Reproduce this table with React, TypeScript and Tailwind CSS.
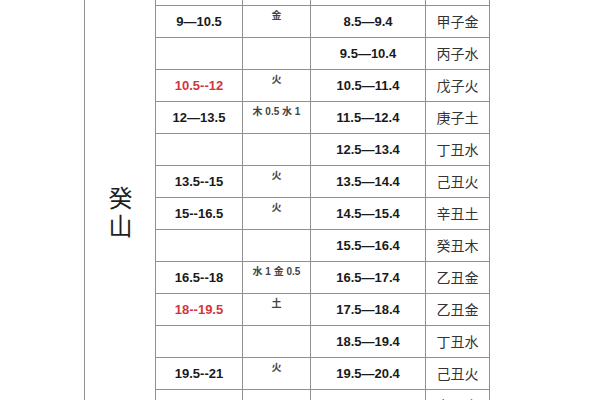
import React from "react";

type Row = {
  range?: string;
  red?: boolean;
  element?: string;
  sub?: string;
  name?: string;
};

const rows: Row[] = [
  {},
  { range: "9—10.5", element: "金", sub: "8.5—9.4", name: "甲子金" },
  { sub: "9.5—10.4", name: "丙子水" },
  { range: "10.5--12", red: true, element: "火", sub: "10.5—11.4", name: "戊子火" },
  { range: "12—13.5", element: "木 0.5 水 1", sub: "11.5—12.4", name: "庚子土" },
  { sub: "12.5—13.4", name: "丁丑水" },
  { range: "13.5--15", element: "火", sub: "13.5—14.4", name: "己丑火" },
  { range: "15--16.5", element: "火", sub: "14.5—15.4", name: "辛丑土" },
  { sub: "15.5—16.4", name: "癸丑木" },
  { range: "16.5--18", element: "水 1 金 0.5", sub: "16.5—17.4", name: "乙丑金" },
  { range: "18--19.5", red: true, element: "土", sub: "17.5—18.4", name: "乙丑金" },
  { sub: "18.5—19.4", name: "丁丑水" },
  { range: "19.5--21", element: "火", sub: "19.5—20.4", name: "己丑火" },
  { sub: "20.5—21.4", name: "辛丑土" },
];

const cell = "border-r border-b border-[#8f8f8f] h-[32px] flex items-center justify-center";

export default function App() {
  return (
    <div
      className="w-[600px] h-[400px] overflow-hidden bg-white"
      style={{ fontFamily: '"Liberation Sans", "Noto Sans CJK SC", sans-serif' }}
    >
      <div className="ml-[84px] -mt-[26px] w-[406px] border-l border-[#8f8f8f] grid grid-cols-[71px_87px_68px_115px_64px] auto-rows-[32px]">
        <div
          className="border-r border-[#8f8f8f] flex justify-center pt-[212px] text-[24px] text-[#1e1e1e]"
          style={{ gridRow: "1 / span 14", fontFamily: '"Noto Sans CJK SC", sans-serif' }}
        >
          <span className="[writing-mode:vertical-rl] tracking-[4px] leading-none">癸山</span>
        </div>
        {rows.map((r, i) => (
          <React.Fragment key={i}>
            <div
              className={`${cell} text-[13px] font-bold ${r.red ? "text-[#d2343d]" : "text-[#1a1a1a]"}`}
            >
              {r.range}
            </div>
            <div className="border-r border-b border-[#8f8f8f] h-[32px] flex justify-center pt-[3px] text-[10px] leading-[14px] font-bold text-[#444]">
              {r.element}
            </div>
            <div className={`${cell} text-[13px] font-bold text-[#1a1a1a]`}>{r.sub}</div>
            <div
              className={`${cell} text-[14px] text-[#333]`}
              style={{ fontFamily: '"Noto Sans CJK SC", sans-serif' }}
            >
              {r.name}
            </div>
          </React.Fragment>
        ))}
      </div>
    </div>
  );
}
